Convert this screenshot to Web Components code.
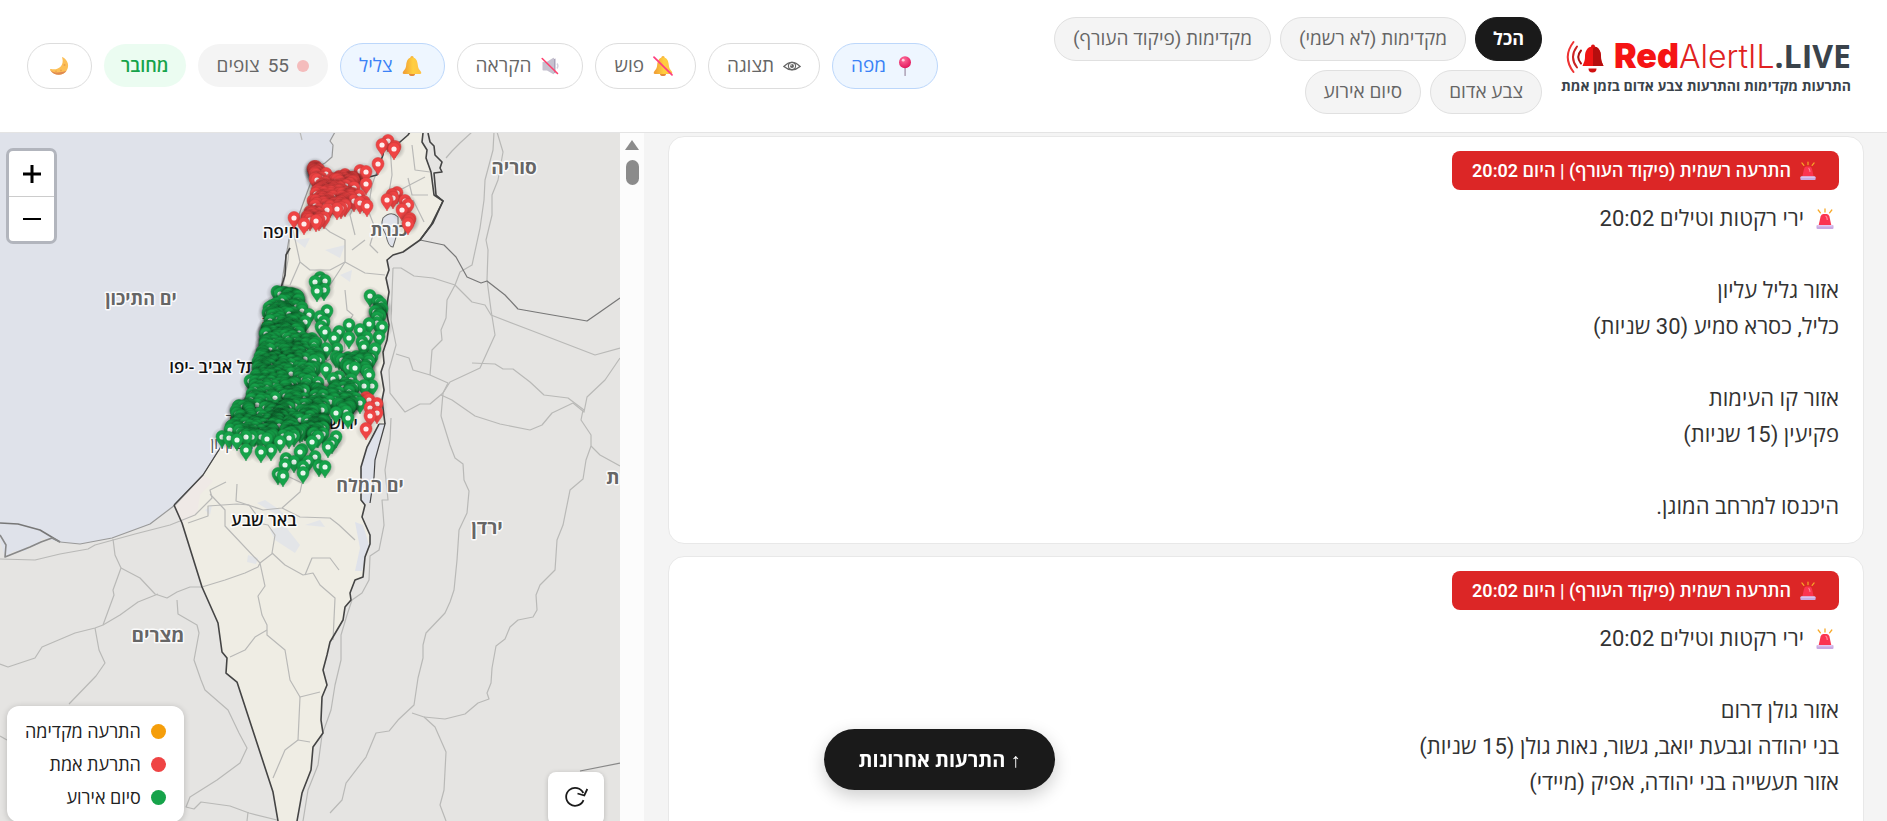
<!DOCTYPE html>
<html lang="he" dir="rtl">
<head>
<meta charset="utf-8">
<meta name="viewport" content="width=device-width, initial-scale=1">
<title>RedAlertIL.LIVE</title>
<style>
html, body { height: 100%; margin: 0; }
body {
  font-family: Roboto, "Open Sans", "Liberation Sans", sans-serif;
  background: #f4f4f4;
  color: #333;
  overflow: hidden;
}
</style>
</head>
<body>
<alert-app></alert-app>

<script>
const ICONS = {
  pin: `<svg viewBox="0 0 20 20"><defs><radialGradient id="g" cx=".4" cy=".3" r=".7"><stop offset="0" stop-color="#ff6f9c"/><stop offset="1" stop-color="#e2195d"/></radialGradient></defs><rect x="9.4" y="10" width="1.4" height="10" rx=".6" fill="#a79bb0"/><circle cx="10" cy="6.2" r="6" fill="url(#g)"/><circle cx="8.2" cy="4.2" r="1.4" fill="#ffd0df"/></svg>`,
  eye: `<svg viewBox="0 0 20 20" fill="none" stroke="#666"><path d="M1 10.5Q10 1.500 19 10.500Q10 18 1 10.500Z" stroke-width="1.500"/><circle cx="10" cy="10" r="4" stroke-width="1.300"/><circle cx="10" cy="10" r="2.200" fill="#666" stroke="none"/><circle cx="9" cy="9" r=".8" fill="#fff" stroke="none"/></svg>`,
  bell: `<svg viewBox="0 0 20 20"><defs><linearGradient id="g"><stop offset="0" stop-color="#ef9a35"/><stop offset=".55" stop-color="#ffcf3f"/><stop offset="1" stop-color="#ffc148"/></linearGradient></defs><ellipse cx="10" cy="18" rx="3" ry="2" fill="#e58a3a"/><circle cx="10" cy="1.800" r="1.700" fill="#f6b23c"/><path d="M10 1.500C6 1.500 4.500 5 4.200 9 4 12 2.800 13.500 1.200 15.500 .3 17 .6 18 2 18H18c1.400 0 1.700-1 .8-2.500C17.200 13.500 16 12 15.800 9 15.500 5 14 1.500 10 1.500Z" fill="url(#g)"/></svg>`,
  mutebell: `<svg viewBox="0 0 20 20"><defs><linearGradient id="g"><stop offset="0" stop-color="#ef9a35"/><stop offset=".55" stop-color="#ffcf3f"/><stop offset="1" stop-color="#ffc148"/></linearGradient></defs><ellipse cx="10" cy="18" rx="3" ry="2" fill="#e58a3a"/><circle cx="10" cy="1.800" r="1.700" fill="#f6b23c"/><path d="M10 1.500C6 1.500 4.500 5 4.200 9 4 12 2.800 13.500 1.200 15.500 .3 17 .6 18 2 18H18c1.400 0 1.700-1 .8-2.500C17.200 13.500 16 12 15.800 9 15.500 5 14 1.500 10 1.500Z" fill="url(#g)"/><path d="M1 1.200 19 18.800" stroke="#ff3f7f" stroke-width="1.800" stroke-linecap="round"/></svg>`,
  mute: `<svg viewBox="0 0 20 20"><path d="M2.500 6.500q0-.8.800-.8H7L13 2q1-.5 1 .5v15q0 1-1 .5L7 14.500H3.300q-.8 0-.8-.8Z" fill="#c6c1cf"/><path d="M14 3v14l1.500.5V2.500Z" fill="#a9a2b8"/><path d="M17 7.500q2 2.500 0 5" fill="none" stroke="#d4d0dc" stroke-width="1.300"/><path d="M2.200 2.500 17.500 17.500" stroke="#ff3f6d" stroke-width="1.600" stroke-linecap="round"/></svg>`,
  moon: `<svg viewBox="0 0 20 20"><path d="M13.500 1C19 4 20.800 10 17.500 14.800 14 20 5.500 20.500 1.200 14.200 .8 13.300 1.300 12.800 2.200 13.100 9.500 14.500 15.500 9.500 13.200 1.700 13.100 1.100 13.100 .8 13.500 1Z" fill="#fcbf56"/><path d="M17.500 14.800C14 20 5.500 20.500 1.200 14.200c3.300 2.500 9 3.300 16.300.6Z" fill="#df8a53"/><circle cx="15.500" cy="9" r="1" fill="#eaa04d"/><circle cx="12" cy="14.500" r=".9" fill="#eaa04d"/><circle cx="7" cy="15.200" r=".8" fill="#eaa04d"/></svg>`,
  siren: `<svg viewBox="0 0 20 20"><path d="M10 0V3M3.200 1 5.400 3.800M16.800 1 14.600 3.800" stroke="#f7a928" stroke-width="1.300" stroke-linecap="round"/><path d="M3.500 17 5.600 7.500Q6.300 5 8.200 5H11.800Q13.700 5 14.400 7.500L16.500 17Z" fill="#fb3550"/><path d="M10.500 7q1.500.5 1.800 4" stroke="#ff8898" stroke-width="1.200" fill="none"/><rect x="1.500" y="16" width="17" height="4" rx="1" fill="#c9abe2"/><path d="M2.500 16h15v1.500H2.500Z" fill="#e0c9f0"/></svg>`,
  refresh: `<svg viewBox="0 0 24 24" fill="none" stroke="#1a1a1a" stroke-width="1.800"><path d="M19.500 15.200A9 9 0 1 1 19.300 8"/><path d="M13.500 8.500 20.300 10.500 23.300 4"/></svg>`,
  logo: `<svg viewBox="0 0 38 34" fill="none" stroke="#e02020" stroke-width="2" stroke-linecap="round"><path d="M7.500 2Q-4 17 7.500 32" stroke="#e33"/><path d="M11 6.500Q3 17 11 27.500" stroke="#c22"/><path d="M15 10.500Q9.500 17 15 23.500" stroke="#a11"/><path d="M27 6.500c-6 0-8 5-8 10 0 5-1.500 6.500-2.500 9.500H37.500c-1-3-2.500-4.500-2.500-9.500 0-5-2-10-8-10Z" fill="#f01414" stroke="none"/><path d="M27 6.500V26H37.500c-1-3-2.500-4.500-2.500-9.500 0-5-2-10-8-10Z" fill="#b50e0e" stroke="none"/><circle cx="27" cy="6.500" r="2" fill="#d11" stroke="none"/><path d="M22.500 28.500h8a4 4 0 0 1-8 0Z" fill="#d01010" stroke="none"/></svg>`
};

/* Small base: every element clones its own template into an open root. */
function define(name, html, setup) {
  const template = document.createElement('template');
  template.innerHTML = html;
  customElements.define(name, class extends HTMLElement {
    constructor() {
      super();
      this.attachShadow({ mode: 'open' }).append(template.content.cloneNode(true));
    }
    connectedCallback() { if (setup) setup(this, this.shadowRoot); }
  });
}

define('app-icon', `<style>
:host { display: inline-flex; flex: none; width: 20px; height: 20px; }
span { display: block; width: 100%; height: 100%; }
svg { width: 100%; height: 100%; display: block; overflow: visible; }
</style><span></span>`, (el, root) => { root.querySelector('span').innerHTML = ICONS[el.getAttribute('name')]; });

define('filter-pill', `<style>
:host { display: block; }
button { display: block; font: inherit; font-size: 19px; line-height: 24px; height: 44px; padding: 0 18px; border: 1px solid #e0e0e0; border-radius: 22px; background: #f4f4f4; color: #666; white-space: nowrap; cursor: pointer; }
:host([active]) button { background: #1a1a1a; border-color: #1a1a1a; color: #fff; font-weight: 700; font-size: 18px; padding: 0 17px; }
</style><button type="button"><slot></slot></button>`);

define('toggle-button', `<style>
:host { display: block; }
button { display: flex; align-items: center; gap: 9px; font: inherit; font-size: 19px; line-height: 24px; height: 46px; padding: 0 18px; border: 1px solid #ddd; border-radius: 23px; background: #fff; color: #666; white-space: nowrap; cursor: pointer; }
:host([on]) button { background: #eef6ff; border-color: #bcd7fb; color: #3b82f6; }
::slotted(app-icon) { margin-inline: 4px 0; }
::slotted(app-icon[name="eye"]) { width: 18px; margin: 0; }
::slotted(app-icon[name="moon"]) { margin: 0 4px 0 3px; }
</style><button type="button"><slot name="icon"></slot><slot></slot></button>`);

define('status-chip', `<style>
:host { display: flex; align-items: center; gap: 8px; height: 43px; padding: 0 19px; border-radius: 22px; background: #f4f4f4; color: #666; font-size: 19px; line-height: 24px; white-space: nowrap; }
:host([kind="online"]) { background: #ebfcf1; color: #16a34a; font-weight: 600; font-size: 18px; padding: 0 17px; }
:host([kind="viewers"])::before { content: ""; width: 12px; height: 12px; border-radius: 50%; background: #f4bcbc; }
</style><slot></slot>`);

define('site-logo', `<style>
:host { display: block; flex: none; }
a { display: flex; flex-direction: column; color: #3a434b; text-decoration: none; width: 285px; }
.name { direction: ltr; display: flex; justify-content: space-between; align-items: center; height: 40px; font-family: Inter, sans-serif; font-size: 32px; line-height: 36px; white-space: nowrap; }
app-icon { width: 38px; height: 34px; }
b { font-weight: 900; font-size: 34px; color: #f51414; }
i { font-style: normal; font-weight: 300; color: #e02222; }
strong { font-family: "Open Sans", sans-serif; font-weight: 700; }
.tag { font-family: "Open Sans", sans-serif; font-weight: 700; font-size: 14px; line-height: 18px; white-space: nowrap; }
</style><a href="#"><span class="name"><app-icon name="logo"></app-icon><span class="word"><b>Red</b><i>AlertIL</i><strong>.LIVE</strong></span></span><span class="tag">התרעות מקדימות והתרעות צבע אדום בזמן אמת</span></a>`);

define('site-header', `<style>
:host { display: flex; align-items: center; justify-content: space-between; box-sizing: border-box; padding: 17px 36px 18px 27px; background: #fff; border-bottom: 1px solid #e4e4e4; }
.start { display: flex; align-items: center; gap: 24px; }
nav { display: flex; flex-direction: column; gap: 9px; }
nav div, .controls { display: flex; align-items: center; }
nav div { gap: 9px; }
.controls { gap: 12px; }
</style>
<div class="start"><site-logo></site-logo>
<nav><div><filter-pill active>הכל</filter-pill><filter-pill>מקדימות (לא רשמי)</filter-pill><filter-pill>מקדימות (פיקוד העורף)</filter-pill></div>
<div><filter-pill>צבע אדום</filter-pill><filter-pill>סיום אירוע</filter-pill></div></nav></div>
<div class="controls">
<toggle-button on><app-icon slot="icon" name="pin"></app-icon>מפה</toggle-button>
<toggle-button><app-icon slot="icon" name="eye"></app-icon>תצוגה</toggle-button>
<toggle-button><app-icon slot="icon" name="mutebell"></app-icon>פוש</toggle-button>
<toggle-button><app-icon slot="icon" name="mute"></app-icon>הקראה</toggle-button>
<toggle-button on><app-icon slot="icon" name="bell"></app-icon>צליל</toggle-button>
<status-chip kind="viewers"><span>55</span><span>צופים</span></status-chip>
<status-chip kind="online">מחובר</status-chip>
<toggle-button><app-icon slot="icon" name="moon"></app-icon></toggle-button>
</div>`);

define('alert-card', `<style>
:host { display: block; background: #fff; border: 1px solid #e8e8e8; border-radius: 16px; padding: 14px 24px 18px; }
h2 { display: flex; align-items: center; gap: 8px; width: max-content; box-sizing: border-box; height: 39px; margin: 0 0 11px; padding: 0 20px; border-radius: 8px; background: #dc2626; color: #fff; font-size: 18px; line-height: 24px; font-weight: 600; }
h2 app-icon { width: 18px; height: 18px; margin-inline-start: 2px; }
div { display: flex; flex-direction: column; gap: 36px; font-size: 22px; line-height: 36px; color: #333; }
</style><article><h2><app-icon name="siren"></app-icon><slot name="title"></slot></h2><div><slot></slot></div></article>`);

define('scroll-rail', `<style>
:host { display: flex; flex-direction: column; align-items: center; flex: none; width: 24px; background: #fcfcfc; }
i { width: 0; margin-top: 7px; border: 7px solid transparent; border-top: 0; border-bottom: 10px solid #8b8b8b; }
b { width: 13px; height: 25px; margin-top: 10px; border-radius: 7px; background: #8b8b8b; }
</style><i></i><b></b>`);

define('alert-feed', `<style>
:host { display: flex; min-width: 0; overflow: hidden; }
section { flex: 1; min-width: 0; display: flex; flex-direction: column; gap: 12px; padding: 3px 23px 3px 24px; }
section alert-card { flex: none; }
section alert-card:last-child { padding-bottom: 54px; }
p app-icon { width: 20px; height: 20px; margin-inline: 4px 11px; vertical-align: -3px; }
p { margin: 0; }
</style><section>
<alert-card><span slot="title">התרעה רשמית (פיקוד העורף) | היום 20:02</span>
<p><app-icon name="siren"></app-icon>ירי רקטות וטילים 20:02</p>
<p>אזור גליל עליון<br>כליל, כסרא סמיע (30 שניות)</p>
<p>אזור קו העימות<br>פקיעין (15 שניות)</p>
<p>היכנסו למרחב המוגן.</p></alert-card>
<alert-card><span slot="title">התרעה רשמית (פיקוד העורף) | היום 20:02</span>
<p><app-icon name="siren"></app-icon>ירי רקטות וטילים 20:02</p>
<p>אזור גולן דרום<br>בני יהודה וגבעת יואב, גשור, נאות גולן (15 שניות)<br>אזור תעשייה בני יהודה, אפיק (מיידי)</p></alert-card>
</section><scroll-rail aria-hidden="true"></scroll-rail>`);

define('map-legend', `<style>
:host { display: block; background: #fff; border-radius: 12px; box-shadow: 0 1px 6px rgba(0,0,0,.2); }
ul { list-style: none; margin: 0; padding: 9px 18px 8px; }
li { display: flex; align-items: center; gap: 10px; height: 33px; font-size: 18px; line-height: 24px; color: #222; white-space: nowrap; }
li::before { content: ""; width: 15px; height: 15px; border-radius: 50%; background: var(--c); }
</style><ul><li style="--c:#f59e0b">התרעה מקדימה</li><li style="--c:#ef4444">התרעת אמת</li><li style="--c:#16a34a">סיום אירוע</li></ul>`);

define('map-zoom', `<style>
:host { display: flex; flex-direction: column; width: 45px; border: 3px solid #b2b5bd; border-radius: 7px; background: #fff; }
button { height: 45px; border: 0; padding: 0; background: none; color: #000; display: grid; place-items: center; cursor: pointer; }
button + button { border-top: 1px solid #ccc; }
svg { width: 18px; height: 18px; }
</style><button type="button" aria-label="הגדלה"><svg viewBox="0 0 18 18"><path d="M9 0V18M0 9H18" stroke="#000" stroke-width="3" fill="none"/></svg></button>
<button type="button" aria-label="הקטנה"><svg viewBox="0 0 18 18"><path d="M0 9H18" stroke="#000" stroke-width="2"/></svg></button>`);

const COAST = '335,132 330,141 333,145 332,157 325,163 316,168 308,190 297,220 290,232 288,245 285,262 281,288 270,320 255,375 240,410 222,445 203,475 175,505 150,524 112,538';
const ROADS = [
  '494,132 493,150 485,180 484,200 480,228 472,265 460,272 455,285 447,300 446,318 441,330 442,340 432,350 430,375',
  '497,132 503,152 498,180 492,195 492,215 486,240 488,250 487,280 491,310 495,335 480,368 450,382 443,393 441,416',
  '393,268 401,268 414,276 433,278 455,285 472,302 485,305 491,315 530,330 595,355 620,348',
  '393,268 391,320 396,345 389,370 390,393 405,412 420,404 430,404 443,393 448,383 430,375 413,370 409,358 396,354',
  '472,363 495,364 503,369 513,369 530,382 544,395 568,398 584,410',
  '441,395 452,400 475,416 500,424 530,430 542,425 552,413 573,403 584,412 587,397 605,380 620,358',
  '583,410 581,420 591,435 591,446 586,460 583,479 570,490 567,505 563,525 557,540 555,570 540,585 536,595 537,610 533,617 518,620 510,627 505,639 496,646 492,668 491,683 487,693 489,699 478,703 465,714 445,719 424,717',
  '591,446 600,455 620,466',
  '441,416 450,445 455,458 463,464 464,480 469,491 467,513 459,530 457,560 454,590 450,602 445,613 426,633 423,645 423,658 418,678 414,705 398,720 389,731 376,733 371,745 366,757 346,783 342,800 330,813',
  '412,713 424,717 435,727 446,752 444,790 440,805 446,821',
  '391,418 390,440 385,470 388,500 382,500 384,525 379,550 370,556 369,580 362,593 352,600 347,615 341,635 341,660 335,685 331,710 322,735 318,765 308,790 303,821',
  '0,559 35,560 60,554 88,549 95,545 135,534 170,525 195,515 212,498 210,490 226,482',
  '113,539 115,555 121,568 113,590 114,595 103,625',
  '121,568 140,578 155,594 167,598 177,592 190,587 202,587',
  '177,600 178,614 197,625 199,633 194,660 201,680 205,690 228,710 239,733 247,748 240,763 217,780 190,797 186,807 194,809 201,802 230,806 249,813 277,820',
  '0,664 8,667 35,658 42,647 75,633 95,628 103,625 120,615 138,602 158,594',
  '95,628 99,650 105,663 96,676 69,704',
  '248,812 247,821', '0,736 7,740', '446,158 452,151 460,143 472,132',
  '188,523 208,516 208,506 237,504 249,505 263,524 268,525 275,535 272,553 285,565 303,575 313,573 320,585 335,598 333,640',
  '210,494 225,510 225,526 260,563 273,553',
  '202,587 225,580 245,573 258,567 260,563 265,586 258,596 262,615 267,625 267,635 285,650 290,680 300,697 320,692',
  '267,630 255,637 245,650 230,657', '300,697 298,740 285,750 273,778', '298,740 310,742',
  '282,508 300,517 330,518 339,525 355,540', '305,575 312,558 330,558 339,570',
  '237,484 236,501 263,510 282,508 300,492 302,483 285,475',
  '293,230 300,262 310,270 330,270 345,262 345,240 330,232 318,222',
  '345,262 365,273 385,275', '345,262 330,285 320,297', '300,262 290,285', '282,292 288,260 290,232',
  '345,290 347,310 353,315 343,330 345,350 320,365', '378,168 372,185 368,210 375,228 370,245 378,253',
  '390,145 392,175 388,198', '408,178 412,195 428,195', '412,145 415,170 430,172', '400,190 425,177', '413,200 424,222',
  '360,172 362,190 350,215 355,235', '365,240 352,250', '300,132 302,140'
];
const GREEN = '325,281 317,291 324,290 315,282 320,278 370,296 378,301 382,309 375,312 379,315 382,327 379,337 375,349 369,324 377,323 349,325 360,330 334,338 339,332 349,338 362,342 367,338 337,349 342,360 355,368 360,360 372,357 368,360 364,347 369,375 372,386 364,386 355,386 351,380 360,403 339,377 333,379 336,357 326,369 318,383 312,379 318,354 326,349 327,311 309,315 320,317 324,322 325,332 321,327 305,322 303,368 303,348 250,381 222,437 229,438 237,440 246,450 261,452 271,450 280,442 289,438 296,432 300,452 302,450 312,442 318,437 328,447 332,443 336,437 315,457 286,459 285,465 294,462 303,467 303,473 308,462 319,466 325,467 283,476 278,474 348,418 336,413 331,395 330,402 349,407 323,396 258,362 267,360';
const RED = '315,179 326,174 353,178 346,193 360,171 366,172 366,184 378,164 382,145 388,141 394,149 395,147 337,209 354,201 367,206 364,202 360,203 294,218 304,224 316,221 327,210 324,218 387,200 393,198 397,193 392,195 405,201 402,210 408,205 410,219 408,224 409,221 366,429 370,416 377,413 370,408 377,404 366,398 369,400 341,208 345,206 338,203 351,196 359,196 310,212 307,217';
const AREAS = [
  ['g', 420, '275,291 296,294 304,303 299,332 303,345 296,375 298,392 286,420 272,438 245,438 229,431 236,407 250,398 255,380 259,360 264,340 267,318 271,300'],
  ['g', 60, '298,338 322,338 320,365 300,400 292,395'],
  ['g', 120, '296,390 322,388 330,400 318,430 300,435 262,440 280,412'],
  ['g', 40, '330,385 350,383 356,398 348,414 334,402'],
  ['g', 22, '333,357 360,352 372,360 366,374 348,368'],
  ['g', 26, '308,424 325,418 325,436 312,438'],
  ['g', 6, '374,300 382,302 382,320 374,320'],
  ['r', 18, '312,165 319,167 322,178 314,182'],
  ['r', 90, '314,190 328,174 352,171 356,182 350,205 330,208 312,208'],
  ['r', 14, '309,210 322,208 320,222 307,220']
];
const LABELS = [
  ['סוריה', 514, 174, 19, 'c'], ['ים התיכון', 141, 305, 18, 'c'], ['ירדן', 487, 534, 19, 'c'], ['מצרים', 158, 642, 19, 'c'],
  ['ים המלח', 370, 492, 18, 'c'], ['כנרת', 389, 236, 17, 'c'], ['ת', 613, 484, 19, 'c'],
  ['חיפה', 281, 238, 17, 't'], ['באר שבע', 264, 526, 17, 't'], ['תל אביב -יפו', 213, 373, 17, 't'],
  ['נתניה', 279, 328, 15, 's'], ['אשדוד', 245, 425, 15, 's'], ['אשקלון', 232, 449, 15, 's'], ['ירושלים', 332, 429, 16, 't']
];
const toPoints = text => text.split(' ').map(pair => pair.split(',').map(Number));

function inside(x, y, poly) {
  let hit = false;
  for (let i = 0, j = poly.length - 1; i < poly.length; j = i++) {
    const [a, b] = poly[i], [c, d] = poly[j];
    if ((b > y) !== (d > y) && x < (c - a) * (y - b) / (d - b) + a) hit = !hit;
  }
  return hit;
}

function buildPins() {
  let seed = 77;
  const random = () => (seed = (seed * 16807) % 2147483647) / 2147483647;
  const pins = [];
  for (const [kind, count, text] of AREAS) {
    const poly = toPoints(text), xs = poly.map(p => p[0]), ys = poly.map(p => p[1]);
    const x0 = Math.min(...xs), x1 = Math.max(...xs), y0 = Math.min(...ys), y1 = Math.max(...ys);
    for (let n = 0; n < count;) {
      const x = x0 + random() * (x1 - x0), y = y0 + random() * (y1 - y0);
      if (inside(x, y, poly)) { pins.push([kind, Math.round(x), Math.round(y)]); n++; }
    }
  }
  toPoints(GREEN).forEach(([x, y]) => pins.push(['g', x, y]));
  toPoints(RED).forEach(([x, y]) => pins.push(['r', x, y]));
  pins.sort((a, b) => a[2] - b[2]);
  return pins.map(([k, x, y]) => `<use href="#${k}" x="${x}" y="${y}"/>`).join('');
}

define('alert-map', `<style>
:host { display: block; position: relative; overflow: hidden; background: #e5e4e2; }
svg.map { display: block; width: 100%; height: 100%; }
text { font-family: "Open Sans", sans-serif; text-anchor: middle; paint-order: stroke; stroke: #fff; stroke-width: 3px; stroke-linejoin: round; stroke-opacity: .85; }
.c { font-weight: 700; fill: #666; } .t { font-weight: 600; fill: #111; } .s { fill: #555; font-weight: 500; }
.roads { fill: none; stroke: #b9b9b7; stroke-width: 1.2; stroke-linejoin: round; }
.border { fill: none; stroke: #444; stroke-width: 1.6; stroke-linejoin: round; }
map-zoom, map-legend, .refresh { position: absolute; }
map-zoom { left: 6px; top: 15px; }
map-legend { left: 7px; bottom: -1px; }
.refresh { right: 16px; bottom: -4px; width: 56px; height: 53px; display: grid; place-items: center; border: 0; padding: 0 0 4px; border-radius: 8px; background: #fff; box-shadow: 0 1px 5px rgba(0,0,0,.2); cursor: pointer; }
.refresh app-icon { width: 24px; height: 24px; }
</style>
<svg class="map" viewBox="0 133 620 688" preserveAspectRatio="xMinYMin slice" role="img" aria-label="מפת התרעות"></svg>
<map-zoom></map-zoom><map-legend></map-legend>
<button class="refresh" type="button" aria-label="רענון"><app-icon name="refresh"></app-icon></button>`, (el, root) => {
  const east = '423,133 422,142 427,150 426,158 431,172 434,195 443,201 433,223 420,240 403,252 393,255 387,260 389,270 386,278 389,292 386,310 389,325 387,340 383,352 384,363 381,372 384,390 382,400 385,424';
  const south = '361,500 365,505 362,517 370,535 370,544 365,557 363,577 355,580 350,593 351,600 345,607 343,620 330,642 327,655 323,670 327,685 322,697 321,720 323,733 313,747 311,770 302,793 297,821';
  const west = '174,505 182,523 202,587 218,623 222,652 227,658 226,673 237,682 255,737 273,792 278,821';
  const north = '316,182 353,182 357,180 377,175 378,168 383,155 384,147 400,142 408,135 410,132';
  root.querySelector('svg.map').innerHTML = `
<defs>
<radialGradient id="sh"><stop offset=".35" stop-color="#000" stop-opacity=".24"/><stop offset="1" stop-color="#000" stop-opacity="0"/></radialGradient>
<radialGradient id="shr"><stop offset=".35" stop-color="#000" stop-opacity=".15"/><stop offset="1" stop-color="#000" stop-opacity="0"/></radialGradient>
<g id="g"><circle cx="0" cy="1" r="11" fill="url(#sh)"/><path d="M0 11C-1.500 7-6 4-6-.5A6 6 0 0 1 6-.5C6 4 1.500 7 0 11Z" fill="#16a34a" stroke="#128c3f" stroke-width=".5"/><circle r="2.600" fill="#fff" fill-opacity=".9"/></g>
<g id="r"><circle cx="0" cy="1" r="11" fill="url(#shr)"/><path d="M0 11C-1.500 7-6 4-6-.5A6 6 0 0 1 6-.5C6 4 1.500 7 0 11Z" fill="#ef4444" stroke="#d53a3a" stroke-width=".5"/><circle r="2.600" fill="#fff" fill-opacity=".9"/></g>
</defs>
<polygon fill="#dfe2ea" points="0,132 ${COAST} 80,544 60,542 42,538 38,545 28,546 26,551 14,551 5,557 0,540"/>
<polygon fill="#efede4" points="${north} ${east} 379,424 ${south} ${[...west.split(' ')].reverse().join(' ')} 203,475 222,445 240,410 255,375 270,320 281,288 285,262 288,245 290,232 297,220 308,190"/>
<polygon fill="#efe9e6" points="174,505 182,523 197,514 200,495 213,481 203,475"/>
<g fill="#e3e5e8"><path d="M257 503 265 500 280 510 287 518 272 512ZM270 530 285 526 300 545 295 553 275 540ZM305 525 320 520 325 527ZM248 555 258 558 256 564 247 562ZM295 240 310 238 305 248ZM325 250 345 245 340 258ZM340 275 352 270 350 282ZM205 510 212 505 210 515Z"/></g>
<g fill="#dfe2ea"><path d="M379 423 384 425 376 460 374 477 371 503 362 503 361 467 367 447ZM355 522 363 525 369 545 362 571 355 571 360 548Z"/></g>
<g class="roads">${ROADS.map(p => `<polyline points="${p}"/>`).join('')}</g>
<polyline class="border" style="stroke:#999;stroke-width:1.200" points="${COAST} 80,544 60,542"/>
<polyline class="border" style="stroke:#777" points="0,523 18,524 40,530 60,542"/>
<polyline class="border" style="stroke:#888" points="60,542 52,538 41,542 30,547 20,551 5,557 6,545 0,535"/>
<polyline class="border" style="stroke:#777;stroke-width:1.200" points="420,240 444,245 456,257 467,277 481,283 487,281 505,295 518,309 535,312 587,321 600,312 620,298"/>
<polyline class="border" style="stroke:#888;stroke-width:1.200" points="580,771 620,763"/>
<polyline class="border" points="290,248 286,255 285,275 281,288"/>
<polyline class="border" style="stroke-width:1.200" points="240,410 222,445 203,475 174,505"/>
<polyline class="border" points="${north}"/><polyline class="border" points="${east}"/><polyline class="border" points="${west}"/>
<polyline class="border" points="379,424 367,447 361,467 ${south}"/>
<polyline class="border" style="stroke-width:1.200" points="379,424 385,424 375,460 374,477 370,503"/>
<polyline class="border" points="428,133 430,142 434,146 435,155 442,162 440,168 442,172 434,173 436,195 443,201 431,225 420,240"/>
<path d="M383 218Q391 210 398 217 399 230 393 247 388 247 386 235 380 225 383 218Z" fill="#dfe2ea" stroke="#666"/>
${LABELS.map(([t, x, y, s, c]) => `<text class="${c}" x="${x}" y="${y}" font-size="${s}">${t}</text>`).join('')}
${buildPins()}`;
});

define('latest-button', `<style>
:host { display: block; position: fixed; left: calc(50% - 4px); bottom: 31px; transform: translateX(-50%); }
button { font: inherit; font-weight: 700; font-size: 20px; line-height: 28px; height: 61px; padding: 0 35px; border: 0; border-radius: 31px; background: #1a1a1a; color: #fff; white-space: nowrap; box-shadow: 0 6px 18px rgba(0,0,0,.2); cursor: pointer; }
</style><button type="button">↑ התרעות אחרונות</button>`);

define('alert-app', `<style>
:host { display: flex; flex-direction: column; height: 100vh; }
site-header { flex: none; }
main { flex: 1; min-height: 0; display: grid; grid-template-columns: 47fr 23fr; grid-template-rows: minmax(0, 1fr); }
</style><site-header></site-header><main><alert-feed></alert-feed><alert-map></alert-map></main><latest-button></latest-button>`);
</script>
</body>
</html>
